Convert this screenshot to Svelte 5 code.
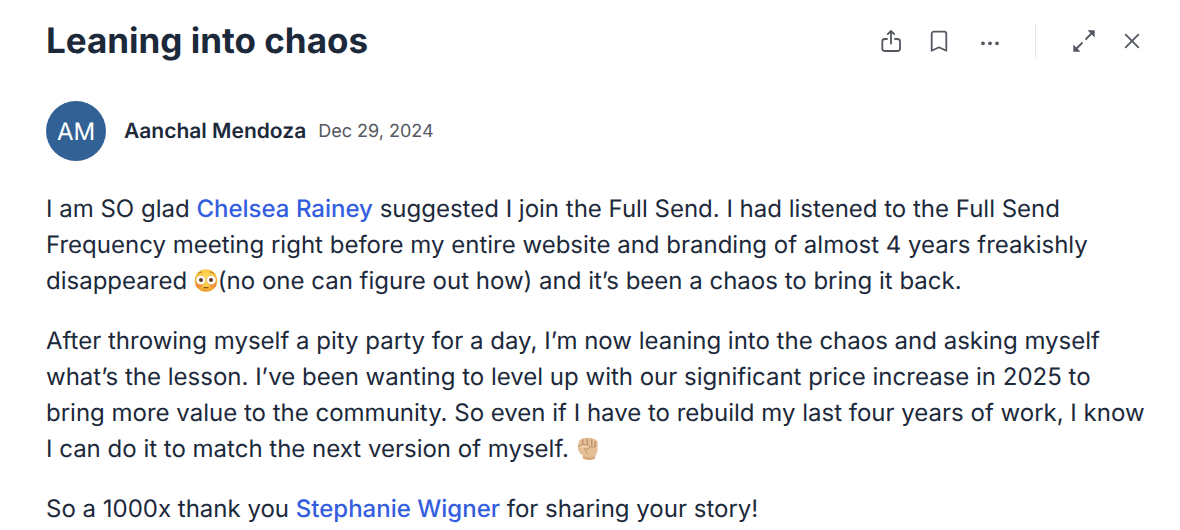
<script lang="ts">
	const post = {
		title: 'Leaning into chaos',
		author: 'Aanchal Mendoza',
		initials: 'AM',
		date: 'Dec 29, 2024'
	};
</script>

<article class="post">
	<header class="post-header">
		<h1>{post.title}</h1>
		<div class="actions">
			<button type="button" aria-label="Share">
				<svg width="36" height="36" viewBox="0 0 36 36">
					<path d="M14 16h-2.2a2.5 2.5 0 0 0-2.5 2.5v7a2.5 2.5 0 0 0 2.5 2.5h12.7a2.5 2.5 0 0 0 2.5-2.5v-7a2.5 2.5 0 0 0-2.5-2.5H22" />
					<path d="M18 20.5V8.5M14.8 11.2 18 8l3.2 3.2" />
				</svg>
			</button>
			<button type="button" aria-label="Bookmark">
				<svg width="36" height="36" viewBox="0 0 36 36">
					<path d="M10.7 27.7V10.7a2 2 0 0 1 2-2h10.6a2 2 0 0 1 2 2v17L18 24.3z" />
				</svg>
			</button>
			<button type="button" class="more" aria-label="More options">
				<svg class="solid" width="36" height="36" viewBox="0 0 36 36">
					<circle cx="11" cy="20.3" r="1.9" />
					<circle cx="18" cy="20.3" r="1.9" />
					<circle cx="25" cy="20.3" r="1.9" />
				</svg>
			</button>
			<span class="divider"></span>
			<button type="button" aria-label="Expand">
				<svg width="36" height="36" viewBox="0 0 36 36">
					<path d="M20 16l7-7M16 20l-7 7" />
					<path class="tip" d="M21.5 7.3h7.2v7.2zM7.3 21.5v7.2h7.2z" />
				</svg>
			</button>
			<button type="button" aria-label="Close">
				<svg width="36" height="36" viewBox="0 0 36 36">
					<path d="M11.7 11.7l12.6 12.6M24.3 11.7 11.7 24.3" />
				</svg>
			</button>
		</div>
	</header>

	<div class="byline">
		<span class="avatar">{post.initials}</span>
		<span class="author">{post.author}</span>
		<time datetime="2024-12-29">{post.date}</time>
	</div>

	<div class="body">
		<p>
			I am SO glad <a href="#chelsea-rainey">Chelsea Rainey</a> suggested I join the Full Send. I had
			listened to the Full Send Frequency meeting right before my entire website and branding of
			almost 4 years freakishly disappeared <svg class="emoji" viewBox="0 0 24 24" role="img" aria-label="flushed face">
				<defs>
					<radialGradient id="skin" cx="50%" cy="40%" r="62%">
						<stop offset="0" stop-color="#ffdf65" />
						<stop offset="0.65" stop-color="#fbc443" />
						<stop offset="1" stop-color="#e99222" />
					</radialGradient>
				</defs>
				<circle cx="12" cy="11.5" r="11.3" fill="url(#skin)" />
				<ellipse cx="5" cy="16" rx="3.4" ry="2.6" fill="#f36b3d" opacity="0.5" />
				<ellipse cx="19" cy="16" rx="3.4" ry="2.6" fill="#f36b3d" opacity="0.5" />
				<path d="M4 5q1.4-2 4-2.1M20 5q-1.4-2-4-2.1" fill="none" stroke="#a8702a" />
				<circle cx="6.7" cy="11" r="4.6" fill="#fff" stroke="#d6a253" stroke-width="0.4" />
				<circle cx="17.3" cy="11" r="4.6" fill="#fff" stroke="#d6a253" stroke-width="0.4" />
				<circle cx="7" cy="11" r="2" fill="#5d3926" />
				<circle cx="17" cy="11" r="2" fill="#5d3926" />
				<path d="M10 18.7h4" stroke="#8b5222" stroke-width="1.2" stroke-linecap="round" />
			</svg>(no one can figure out how) and it’s been a chaos to bring it back.
		</p>
		<p>
			After throwing myself a pity party for a day, I’m now leaning into the chaos and asking myself
			what’s the lesson. I’ve been wanting to level up with our significant price increase in 2025 to
			bring more value to the community. So even if I have to rebuild my last four years of work, I
			know I can do it to match the next version of myself. <svg class="emoji" viewBox="0 0 24 24" role="img" aria-label="raised fist">
				<path d="M1.8 9.2 3 3.9q.6-1.8 2.5-1.7Q7 .6 9.5 1.1q1.5-1 3.4.1 1.9-.9 3.5.5 2.3-.4 3.4 1.4 2 .5 2 2.6L21.5 14q-.3 3.3-2.4 5.2v2.6q-6 2.2-12.2 0v-3Q3.2 16.5 2.2 13z" fill="#e5bf95" />
				<path d="M6.9 19q5.5 2.6 12.2.4v2.4q-6 2.2-12.2 0z" fill="#d3a87c" />
				<path d="M7 3 6.2 8.4M11.2 2.4v5.2M15.8 2.6v5.9M19.3 4.3l-.6 5.3" fill="none" stroke="#a97c55" stroke-width="0.9" stroke-linecap="round" />
				<path d="M2.3 9.3q4.5-3 10-1.2 2.1 1 .8 3-1.6 1.5-5 1" fill="#eecda7" stroke="#b48860" stroke-width="0.8" stroke-linecap="round" />
				<path d="M13.8 9.8q2.7 1.2 6-.2M8.4 12.1q2.6 1.7 2.8 4" fill="none" stroke="#b68c64" stroke-width="0.8" stroke-linecap="round" />
			</svg>
		</p>
		<p>
			So a 1000x thank you <a href="#stephanie-wigner">Stephanie Wigner</a> for sharing your story!
		</p>
	</div>
</article>

<style>
	:global(body) {
		margin: 0;
		background: #fff;
		overflow: hidden;
	}

	.post {
		padding: 17px 30px 0 46px;
		font-family: Inter, sans-serif;
		text-rendering: geometricPrecision;
		color: #1c293b;
	}

	.post-header {
		display: flex;
		align-items: center;
		justify-content: space-between;
	}

	h1 {
		margin: 0;
		font-size: 35px;
		line-height: 48px;
		font-weight: 700;
	}

	.actions {
		display: flex;
		align-items: center;
		gap: 12px;
	}

	button {
		display: flex;
		align-items: center;
		justify-content: center;
		width: 36px;
		height: 36px;
		padding: 0;
		border: 0;
		border-radius: 6px;
		background: none;
		color: #545861;
		cursor: pointer;
	}

	button:hover {
		background: #f3f4f6;
	}

	button svg {
		flex: none;
		fill: none;
		stroke: currentColor;
		stroke-width: 1.8;
		stroke-linecap: round;
		stroke-linejoin: round;
	}

	button .solid,
	button .tip {
		fill: currentColor;
		stroke: none;
	}

	.more {
		width: 42px;
	}

	.divider {
		width: 1px;
		height: 36px;
		margin: 0 18px 0 12px;
		background: #e4e6e9;
	}

	.byline {
		display: flex;
		align-items: center;
		margin-top: 36px;
	}

	.avatar {
		display: flex;
		align-items: center;
		justify-content: center;
		width: 60px;
		height: 60px;
		border-radius: 50%;
		background: #326295;
		color: #fff;
		font-size: 24px;
	}

	.author {
		margin: 0 12px 0 18px;
		font-size: 21px;
		font-weight: 600;
	}

	time {
		font-size: 18px;
		color: #545861;
	}

	.body {
		margin-top: 30px;
		font-size: 24px;
		line-height: 36px;
	}

	p {
		margin: 0 0 24px;
	}

	a {
		color: #345ee0;
		font-weight: 500;
		text-decoration: none;
	}

	.emoji {
		width: 24px;
		height: 24px;
		vertical-align: -4px;
	}
</style>
